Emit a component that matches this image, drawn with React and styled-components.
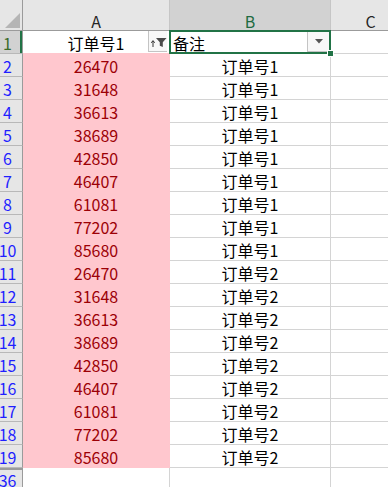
import React from 'react';
import styled, { createGlobalStyle } from 'styled-components';

const GlobalStyle = createGlobalStyle`
	html, body {
		margin: 0;
		padding: 0;
		background: #ffffff;
		overflow: hidden;
	}
	* {
		box-sizing: border-box;
	}
`;

const green = '#217346';
const font = `'Noto Sans CJK SC', 'Noto Sans', sans-serif`;

const Sheet = styled.div`
	position: relative;
	display: grid;
	grid-template-columns: 23px 147px 161px 80px;
	grid-template-rows: 31px;
	grid-auto-rows: 23px;
	width: 388px;
	height: 487px;
	overflow: hidden;
	font-family: ${font};
	font-size: 16px;
	color: #000000;
`;

const Corner = styled.div`
	position: relative;
	background: #e6e6e6;
	border-right: 1px solid #9b9b9b;
	border-bottom: 1px solid #9b9b9b;

	svg {
		position: absolute;
		right: 2px;
		bottom: 2px;
	}
`;

const ColHeader = styled.div`
	display: flex;
	align-items: flex-end;
	justify-content: center;
	line-height: 17px;
	background: ${(p) => (p.$selected ? '#d2d2d2' : '#e6e6e6')};
	color: ${(p) => (p.$selected ? '#1f6b42' : '#262626')};
	border-right: 1px solid #c6c6c6;
	border-bottom: 1px solid #9b9b9b;
`;

const RowHeader = styled.div`
	display: flex;
	align-items: flex-end;
	justify-content: center;
	padding-right: 7px;
	line-height: 19px;
	background: ${(p) => (p.$selected ? '#d2d2d2' : '#e6e6e6')};
	color: ${(p) => (p.$selected ? '#3c6b2a' : '#1f1fff')};
	border-right: 1px solid #9b9b9b;
	border-bottom: 1px solid #b8b8b8;
	box-shadow: ${(p) =>
		p.$selected
			? `inset -2px 0 0 ${green}`
			: p.$gapAbove
			? 'inset 0 2px 0 #9b9b9b'
			: 'none'};
	white-space: nowrap;
`;

const Cell = styled.div`
	position: relative;
	display: flex;
	align-items: flex-end;
	justify-content: ${(p) => (p.$left ? 'flex-start' : 'center')};
	padding: 0 ${(p) => (p.$left ? '3px' : '0')};
	line-height: 19px;
	white-space: nowrap;
	background: ${(p) => (p.$alert ? '#ffc7ce' : '#ffffff')};
	color: ${(p) => (p.$alert ? '#9c0006' : '#000000')};
	border-right: 1px solid ${(p) => (p.$alert ? '#ffc7ce' : '#d4d4d4')};
	border-bottom: 1px solid ${(p) => (p.$alert || p.$fillBelow ? '#ffc7ce' : '#d4d4d4')};
`;

const DropButton = styled.div`
	position: absolute;
	top: 0;
	right: ${(p) => p.$right}px;
	width: ${(p) => p.$width}px;
	height: 21px;
	display: flex;
	align-items: center;
	justify-content: center;
	background: #f8f8f8;
	border-left: 1px solid #c4c4c4;
	border-bottom: 1px solid #c4c4c4;
`;

const Selection = styled.div`
	position: absolute;
	left: 169px;
	top: 30px;
	width: 162px;
	height: 24px;
	border: 2px solid ${green};
	pointer-events: none;
`;

const FillHandle = styled.div`
	position: absolute;
	right: -5px;
	bottom: -5px;
	width: 7px;
	height: 7px;
	background: ${green};
	border: 1px solid #ffffff;
`;

const orders = [26470, 31648, 36613, 38689, 42850, 46407, 61081, 77202, 85680];

const rows = [
	...orders.map((n) => ({ a: n, b: '订单号1' })),
	...orders.map((n) => ({ a: n, b: '订单号2' })),
];

const FilterIcon = () => (
	<svg width="17" height="15" viewBox="0 0 17 15">
		<path d="M3 13 V7" stroke="#333" strokeWidth="1" fill="none" />
		<path d="M1.3 8.8 L3 6.6 L4.7 8.8" stroke="#333" strokeWidth="1" fill="none" />
		<path d="M6 4 H16.5 L12.8 8.3 V13 L9.8 11.8 V8.3 Z" fill="#4a4a4a" />
	</svg>
);

const ArrowIcon = () => (
	<svg width="8" height="5" viewBox="0 0 8 5">
		<path d="M0 0 H8 L4 4.5 Z" fill="#555" />
	</svg>
);

const App = () => {
	return (
		<>
			<GlobalStyle />
			<Sheet>
				<Corner>
					<svg width="15" height="15" viewBox="0 0 15 15">
						<path d="M15 0 V15 H0 Z" fill="#b5b5b5" />
					</svg>
				</Corner>
				<ColHeader>A</ColHeader>
				<ColHeader $selected>B</ColHeader>
				<ColHeader>C</ColHeader>

				<RowHeader $selected>1</RowHeader>
				<Cell $fillBelow>
					订单号1
					<DropButton $right={2} $width={19}>
						<FilterIcon />
					</DropButton>
				</Cell>
				<Cell $left>
					备注
					<DropButton $right={1} $width={22}>
						<ArrowIcon />
					</DropButton>
				</Cell>
				<Cell />

				{rows.map((r, i) => (
					<React.Fragment key={i}>
						<RowHeader>{i + 2}</RowHeader>
						<Cell $alert>{r.a}</Cell>
						<Cell>{r.b}</Cell>
						<Cell />
					</React.Fragment>
				))}

				<RowHeader $gapAbove>36</RowHeader>
				<Cell />
				<Cell />
				<Cell />

				<Selection>
					<FillHandle />
				</Selection>
			</Sheet>
		</>
	);
};

export default App;
